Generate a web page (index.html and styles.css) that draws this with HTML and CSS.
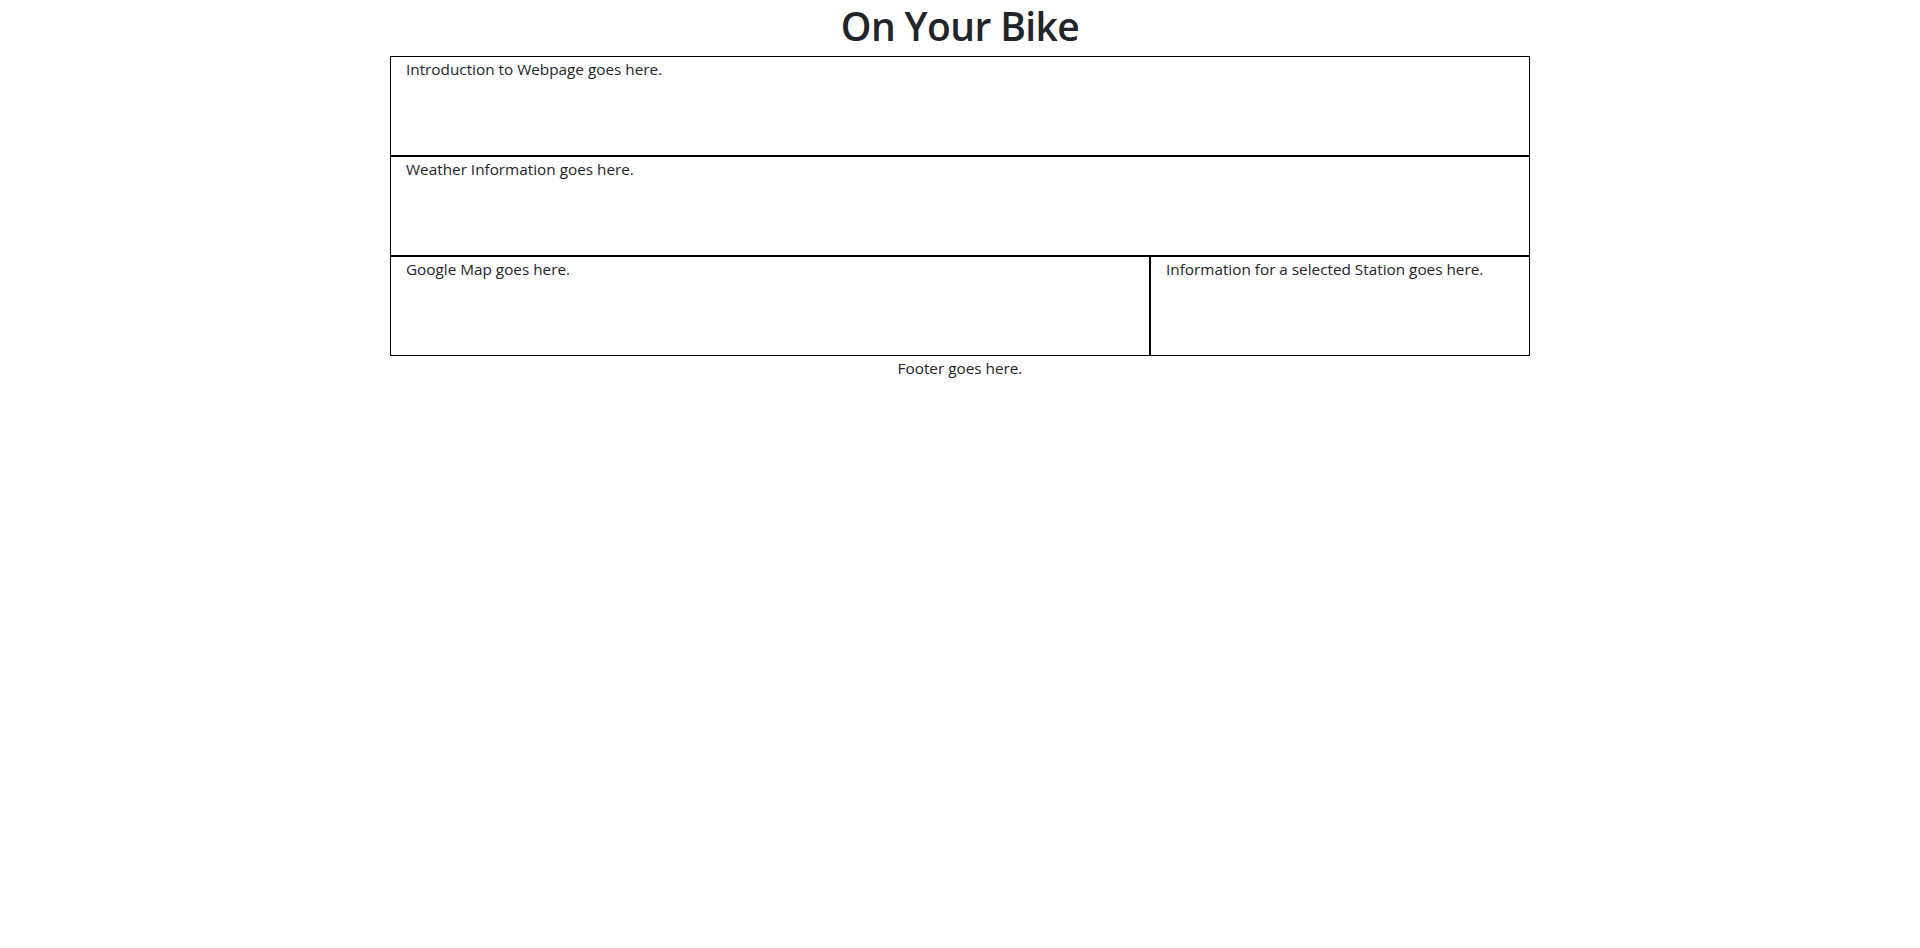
FILE: index.html
```html
<!DOCTYPE html>
<html lang="en">
<head>
<meta charset="utf-8">
<title>On Your Bike</title>
<link rel="stylesheet" href="styles.css">
</head>
<body>
<h1 class="page-title">On Your Bike</h1>
<main class="layout">
  <section class="box">Introduction to Webpage goes here.</section>
  <section class="box">Weather Information goes here.</section>
  <div class="split">
    <section class="box box-map">Google Map goes here.</section>
    <section class="box box-station">Information for a selected Station goes here.</section>
  </div>
  <footer class="footer">Footer goes here.</footer>
</main>
</body>
</html>
```

FILE: styles.css
```css
*, *::before, *::after {
  box-sizing: border-box;
}

body {
  margin: 0;
  font-family: "Open Sans", "Noto Sans", "Liberation Sans", sans-serif;
  font-size: 15.3px;
  line-height: 24px;
  color: #212529;
  background: #fff;
}

.page-title {
  margin: 0 0 8px;
  padding-top: 4px;
  font-size: 39px;
  font-weight: 600;
  line-height: 44px;
  letter-spacing: -0.6px;
  text-align: center;
}

.layout {
  width: 1140px;
  margin: 0 auto;
}

.split {
  display: flex;
}

.box {
  height: 100px;
  border: 1px solid #000;
  padding: 0 15px;
}

.box-map {
  flex: 0 0 66.6667%;
}

.box-station {
  flex: 0 0 33.3333%;
}

.footer {
  text-align: center;
}
```
